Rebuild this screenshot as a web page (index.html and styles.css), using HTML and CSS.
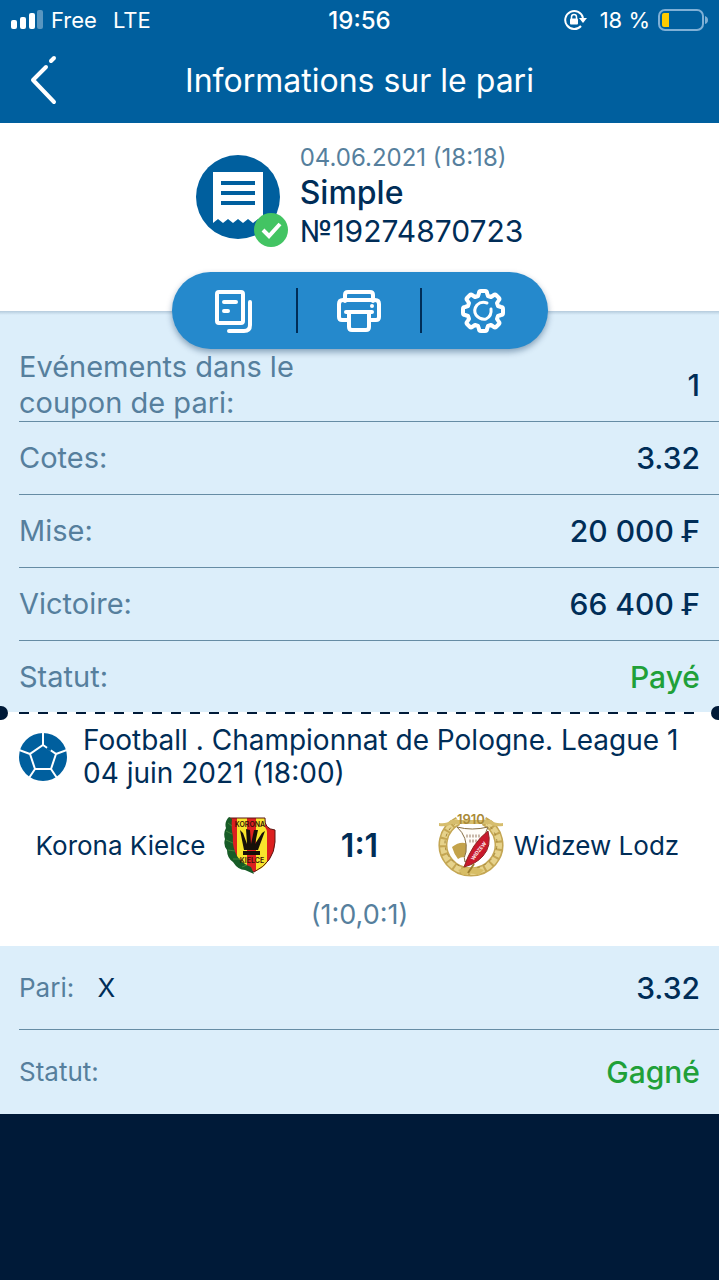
FILE: index.html
```html
<!DOCTYPE html>
<html lang="fr">

<head>
    <meta charset="UTF-8">
    <meta name="viewport" content="width=device-width, initial-scale=1.0">
    <title>Informations sur le pari</title>
    <link rel="stylesheet" href="styles.css">
</head>

<body>
    <div class="status-bar">
        <div class="status-left">
            <svg width="32" height="20" viewBox="0 0 32 20" fill="#fff">
                <rect x="0" y="10" width="6" height="9" rx="2" />
                <rect x="9" y="7" width="6" height="12" rx="2" />
                <rect x="18" y="3" width="6" height="16" rx="2" />
                <rect x="26" y="0" width="6" height="19" rx="2" opacity=".35" />
            </svg>
            <span>Free</span>
            <span class="network">LTE</span>
        </div>
        <time class="clock">19:56</time>
        <div class="status-right">
            <svg width="24" height="22" viewBox="0 0 24 22" fill="none" stroke="#fff" stroke-width="2">
                <path d="M17 17A9 9 0 1 1 19 9" />
                <path d="M15 9h8l-4 5z" fill="#fff" stroke="none" />
                <rect x="6" y="9.500" width="8" height="6" rx="1" fill="#fff" stroke="none" />
                <path d="M7.500 10V8a2.500 2.500 0 0 1 5 0v2" stroke-width="1.500" />
            </svg>
            <span class="percent">18 %</span>
            <svg width="50" height="22" viewBox="0 0 50 22">
                <rect x="1" y="1" width="44" height="20" rx="6" fill="none" stroke="#7fb0d6" stroke-width="2" />
                <path d="M4 6q0-2 2-2h5v14H6q-2 0-2-2z" fill="#fecb00" />
                <path d="M47 7q3 1 3 4t-3 4z" fill="#7fb0d6" />
            </svg>
        </div>
    </div>

    <header class="header">
        <a href="#" class="back" aria-label="Retour">
            <svg width="28" height="50" viewBox="0 0 28 50" fill="none" stroke="#fff" stroke-width="4"
                stroke-linecap="round">
                <path d="M16 12L3 25L24 47" stroke-linejoin="round" />
                <path d="M21 6L24 3" />
            </svg>
        </a>
        <h1>Informations sur le pari</h1>
    </header>

    <main>
        <section class="summary">
            <div class="ticket">
                <svg class="ticket-icon" width="92" height="92" viewBox="0 0 92 92">
                    <circle cx="42" cy="42" r="42" fill="#005f9e" />
                    <path d="M17 17h50v51l-5-4-5 4-5-4-5 4-5-4-5 4-5-4-5 4-5-4-5 4z" fill="#fff" />
                    <path d="M25 28h34M25 38h34M25 48h34" stroke="#005f9e" stroke-width="4" />
                    <circle cx="75" cy="75" r="17" fill="#43c463" />
                    <path d="M67 75l6 6l11-12" fill="none" stroke="#fff" stroke-width="4" />
                </svg>
                <div class="ticket-info">
                    <time class="ticket-date">04.06.2021 (18:18)</time>
                    <h2>Simple</h2>
                    <p>№19274870723</p>
                </div>
            </div>
            <div class="actions">
                <button type="button" aria-label="Copier">
                    <svg width="38" height="44" viewBox="0 0 38 44" fill="none" stroke="#fff" stroke-width="4"
                        stroke-linecap="round" stroke-linejoin="round">
                        <rect x="2" y="3" width="26" height="31" rx="2" />
                        <path d="M9 13h12M9 22h4M35 13v23q0 6-6 6H14" />
                    </svg>
                </button>
                <button type="button" aria-label="Imprimer">
                    <svg width="44" height="42" viewBox="0 0 44 42" fill="none" stroke="#fff" stroke-width="4"
                        stroke-linejoin="round" stroke-linecap="round">
                        <path d="M8 11V5q0-3 3-3h22q3 0 3 3v6" />
                        <path d="M11 30H5q-3 0-3-3V14q0-4 4-4h32q4 0 4 4v13q0 3-3 3h-6" />
                        <path d="M9 22h26M12 22v15q0 3 3 3h14q3 0 3-3V22" />
                        <circle cx="35" cy="16" r="2" fill="#fff" stroke="none" />
                    </svg>
                </button>
                <button type="button" aria-label="Réglages">
                    <svg width="44" height="44" viewBox="0 0 44 44" fill="none" stroke="#fff" stroke-width="4"
                        stroke-linejoin="round" stroke-linecap="round">
                        <path d="M17 7L18 4Q18 2 20 2H24Q26 2 26 4L27 7L30 8L33 6Q34 5 35 6L38 9Q39 10 38 11L36 14L37 17L40 18Q42 18 42 20V24Q42 26 40 26L37 27L36 30L38 33Q39 34 38 35L35 38Q34 39 33 38L30 36L27 37L26 40Q26 42 24 42H20Q18 42 18 40L17 37L14 36L11 38Q10 39 9 38L6 35Q5 34 6 33L8 30L7 27L4 26Q2 26 2 24V20Q2 18 4 18L7 17L8 14L6 11Q5 10 6 9L9 6Q10 5 11 6L14 8Z" />
                        <path d="M26 14Q20 12 16 16Q12 21 15 26Q19 31 25 30Q31 27 30 20" stroke-width="3" />
                    </svg>
                </button>
            </div>
        </section>

        <dl class="details">
            <div class="row">
                <dt>Evénements dans le coupon de pari:</dt>
                <dd>1</dd>
            </div>
            <div class="row">
                <dt>Cotes:</dt>
                <dd>3.32</dd>
            </div>
            <div class="row">
                <dt>Mise:</dt>
                <dd>20 000 ₣</dd>
            </div>
            <div class="row">
                <dt>Victoire:</dt>
                <dd>66 400 ₣</dd>
            </div>
            <div class="row">
                <dt>Statut:</dt>
                <dd class="success">Payé</dd>
            </div>
        </dl>

        <section class="event">
            <div class="tear"></div>
            <div class="event-head">
                <svg width="48" height="48" viewBox="0 0 48 48">
                    <circle cx="24" cy="24" r="24" fill="#005f9e" />
                    <path d="M24 12L37 21L32 36H16L11 21ZM24 12V0M37 21L48 17M32 36L38 45M16 36L10 45M11 21L0 17"
                        fill="none" stroke="#fff" stroke-width="2" />
                    <path d="M28 15l4 2" stroke="#005f9e" stroke-width="3" />
                </svg>
                <p>Football . Championnat de Pologne. League 1<br>04 juin 2021 (18:00)</p>
            </div>
            <div class="match">
                <div class="team home">
                    <span>Korona Kielce</span>
                    <svg width="52" height="58" viewBox="0 0 52 58">
                        <path d="M5 2H41Q40 13 51 14V26Q50 46 30 56Q5 49 5 28Z" fill="#dc201f" />
                        <path d="M13 2h10v51q-6-3-10-8zM32 2h9v9q2 3 2 5v31q-5 6-11 8z" fill="#f8e52c" />
                        <path d="M5 2H41Q40 13 51 14V26Q50 46 30 56Q5 49 5 28Z" fill="none" stroke="#5b1712" />
                        <path d="M5 1Q0 6 2 12Q-1 17 1 23Q-1 29 3 34Q3 42 9 46Q14 54 21 54L30 58L27 51Q17 47 13 40Q8 31 9 21Q7 12 8 3Z" fill="#175c27" />
                        <path d="M4 7l4 3M2 15l6 3M2 24l7 3M4 34l7 1M9 43l7 0M18 51l5-2" stroke="#41833a" />
                        <path d="M16 14l3 3 4 11-1-15 4 1 1 14 3-14 4 0-3 14 7-11 3-2-7 19H20Z" fill="#171009" />
                        <path d="M19 35h17v4H19z" fill="#171009" />
                        <text class="crest-name" x="26" y="11">KORONA</text>
                        <text class="crest-name" x="28" y="47">KIELCE</text>
                    </svg>
                </div>
                <strong class="score">1:1</strong>
                <div class="team away">
                    <svg width="66" height="66" viewBox="0 0 66 66">
                        <path d="M20 9A28 27 0 1 0 46 9" fill="none" stroke="#c4a653" stroke-width="9" />
                        <path d="M20 9A28 27 0 1 0 46 9" fill="none" stroke="#e6d28b" stroke-width="6"
                            stroke-dasharray="6 2" />
                        <path d="M18 11A26 25 0 1 0 48 11" fill="none" stroke="#a3853a" stroke-dasharray="3 4" />
                        <path d="M1 11q8 1 12-3h40q4 4 12 3v3q-9 1-13-2H14q-5 3-13 2z" fill="#d6bd6d" />
                        <path d="M14 35q10-8 20-1v13q-9-4-14 0-4-5-6-12z" fill="#c4a34b" />
                        <path d="M19 15q15 4 31 0-3 5-3 12L27 50q-2-4 1-10 2-15-9-25z" fill="#fffdf8" stroke="#866e43" />
                        <path d="M28 24h14M31 29h9" stroke="#c9b9a9" stroke-width="3" stroke-dasharray="2 1" />
                        <path d="M26 55Q30 43 36 34Q42 25 50 19Q54 34 45 44Q38 52 26 55Z" fill="#c8192c" stroke="#8e2725" />
                        <text class="crest-club" x="42" y="40" transform="rotate(-52 42 40)">WIDZEW</text>
                        <path d="M20 58q13-6 26 0l-5 5q-8-3-16 0z" fill="#d7bd65" />
                        <path d="M30 61l6-9" stroke="#9b7c2f" stroke-width="2" />
                        <text class="crest-year" x="33" y="12">1910</text>
                    </svg>
                    <span>Widzew Lodz</span>
                </div>
            </div>
            <p class="periods">(1:0,0:1)</p>
        </section>

        <dl class="details bet">
            <div class="row">
                <dt>Pari: <span class="pick">X</span></dt>
                <dd>3.32</dd>
            </div>
            <div class="row">
                <dt>Statut:</dt>
                <dd class="success">Gagné</dd>
            </div>
        </dl>
    </main>
</body>

</html>
```
FILE: styles.css
```css
:root {
    --blue: #005f9e;
    --pill: #2589cc;
    --light: #dceefa;
    --navy: #002d57;
    --dark: #001a38;
    --muted: #567f9d;
    --line: #668ca4;
    --green: #20a038;
}

* {
    box-sizing: border-box;
}

body {
    margin: 0;
    min-height: 100vh;
    font-family: Inter, "Liberation Sans", sans-serif;
    color: var(--navy);
    background-color: var(--dark);
}

h1,
h2,
p,
dl,
dd {
    margin: 0;
}

svg {
    display: block;
    flex-shrink: 0;
}

.status-bar {
    display: grid;
    grid-template-columns: 1fr auto 1fr;
    align-items: center;
    height: 40px;
    padding: 0 11px;
    font-size: 22px;
    color: #fff;
    background-color: var(--blue);
}

.status-left,
.status-right {
    display: flex;
    align-items: center;
    gap: 8px;
}

.status-right {
    justify-content: flex-end;
}

.network {
    margin-left: 8px;
}

.percent {
    margin-left: 4px;
}

.clock {
    font-size: 24px;
    font-weight: 500;
}

.header {
    display: grid;
    grid-template-columns: 60px 1fr 60px;
    align-items: center;
    height: 83px;
    padding-bottom: 3px;
    color: #fff;
    background-color: var(--blue);
}

.back {
    padding-left: 30px;
}

.header h1 {
    font-size: 32px;
    font-weight: 400;
    text-align: center;
}

.summary {
    display: flex;
    flex-direction: column;
    align-items: center;
    padding-top: 20px;
    background-color: #fff;
}

.ticket {
    display: flex;
    gap: 12px;
    padding-bottom: 22px;
}

.ticket-icon {
    margin-top: 12px;
}

.ticket-date {
    display: block;
    font-size: 24px;
    line-height: 30px;
    color: var(--muted);
}

.ticket h2 {
    font-size: 32px;
    font-weight: 500;
    line-height: 39px;
}

.ticket p {
    font-size: 30px;
    line-height: 38px;
}

/* sits half over the block below */
.actions {
    display: flex;
    position: relative;
    margin-bottom: -38px;
    padding: 16px 4px 16px 0;
    border-radius: 39px;
    background-color: var(--pill);
    box-shadow: 0 3px 6px rgba(0, 45, 87, 0.4);
}

.actions button {
    display: flex;
    align-items: center;
    justify-content: center;
    width: 124px;
    height: 45px;
    padding: 0;
    border: 0;
    background: none;
    cursor: pointer;
}

.actions button + button {
    border-left: 2px solid var(--navy);
}

.details {
    padding: 38px 0 0 19px;
    background: linear-gradient(#b5cbdc, var(--light) 4px);
}

.row {
    display: flex;
    align-items: center;
    justify-content: space-between;
    height: 73px;
    padding-right: 19px;
    border-bottom: 1px solid var(--line);
    font-size: 30px;
}

.row:last-child {
    height: 71px;
    border-bottom: 0;
}

.row dt {
    max-width: 300px;
    font-size: 29px;
    line-height: 36px;
    color: var(--muted);
}

.row dd {
    font-weight: 500;
}

.row .success {
    color: var(--green);
}

.event {
    position: relative;
    padding-bottom: 14px;
    background-color: #fff;
}

.tear {
    height: 2px;
    margin: 0 19px;
    background: repeating-linear-gradient(90deg, var(--dark) 0 10px, transparent 10px 19px);
}

.tear::before,
.tear::after {
    content: "";
    position: absolute;
    top: -6px;
    left: -6px;
    width: 14px;
    height: 14px;
    border-radius: 50%;
    background-color: var(--dark);
}

.tear::after {
    left: auto;
    right: -6px;
}

.event-head {
    display: flex;
    align-items: center;
    gap: 16px;
    padding: 10px 19px 0;
    font-size: 28px;
    line-height: 33px;
}

.match {
    display: grid;
    grid-template-columns: 1fr 162px 1fr;
    align-items: center;
    padding-top: 22px;
    font-size: 26px;
}

.team {
    display: flex;
    align-items: center;
}

.home {
    gap: 18px;
    justify-content: flex-end;
    padding-right: 3px;
}

.away {
    gap: 10px;
    margin-left: -3px;
}

.score {
    font-size: 32px;
    font-weight: 600;
    text-align: center;
}

.periods {
    padding-top: 20px;
    font-size: 27px;
    line-height: 34px;
    text-align: center;
    color: var(--muted);
}

.crest-name,
.crest-club,
.crest-year {
    font-weight: 600;
    text-anchor: middle;
}

.crest-name {
    font-size: 7px;
    fill: #351109;
}

.crest-club {
    font-size: 5px;
    fill: #fff;
}

.crest-year {
    font-size: 13px;
    fill: #a98a38;
}

.bet {
    padding-top: 0;
    background: var(--light);
}

.bet .row {
    height: 84px;
}

.bet dt {
    font-size: 26px;
}

.pick {
    margin-left: 16px;
    color: var(--navy);
}
```
